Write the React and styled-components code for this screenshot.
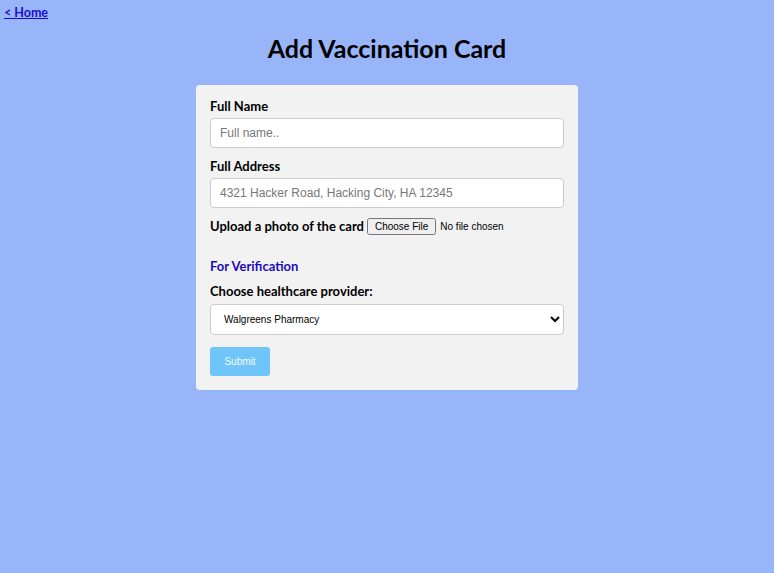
import React from 'react';
import styled, { createGlobalStyle } from 'styled-components';

const GlobalStyle = createGlobalStyle`
  html, body {
    margin: 0;
    padding: 0;
    background-color: #98b5f9;
    font-family: "Lato", "Open Sans", sans-serif;
  }
`;

const Page = styled.div`
  min-height: 573px;
  padding: 1px 0 40px;
  box-sizing: border-box;
`;

const HomeLink = styled.a`
  display: inline-block;
  margin-left: 4px;
  font-size: 12.5px;
  line-height: 17px;
  font-weight: 700;
  color: #1a0dcc;
  text-decoration: underline;
  cursor: pointer;
`;

const Title = styled.h1`
  margin: 12px 0 22px;
  text-align: center;
  font-size: 25px;
  font-weight: 700;
  color: #000;
`;

const Card = styled.form`
  width: 382px;
  margin: 0 auto;
  box-sizing: border-box;
  padding: 13px 14px 14px;
  background-color: #f2f2f2;
  border-radius: 4px;
`;

const Label = styled.label`
  display: block;
  font-size: 13px;
  line-height: 17px;
  font-weight: 700;
  color: #000;
  margin-bottom: ${(p) => p.$gap || 3}px;
`;

const TextInput = styled.input`
  display: block;
  width: 100%;
  height: 30px;
  box-sizing: border-box;
  padding: 0 9px;
  margin-bottom: 10px;
  border: 1px solid #cccccc;
  border-radius: 4px;
  background: #fff;
  font-family: "Liberation Sans", Arial, sans-serif;
  font-size: 12px;
  &::placeholder {
    color: #777;
  }
`;

const UploadRow = styled.div`
  display: flex;
  align-items: center;
  gap: 3px;
  height: 16px;
  margin: 0 0 24px;
  font-size: 13px;
  font-weight: 700;
  white-space: nowrap;
  span {
    flex-shrink: 0;
  }
  input {
    font-family: "Liberation Sans", Arial, sans-serif;
    font-size: 10px;
    font-weight: 400;
  }
`;

const SectionTitle = styled.h3`
  margin: 0 0 8px;
  font-size: 13px;
  line-height: 17px;
  font-weight: 700;
  color: #1a0dbb;
`;

const Select = styled.select`
  display: block;
  width: 100%;
  height: 31px;
  box-sizing: border-box;
  padding: 0 9px;
  margin-bottom: 12px;
  border: 1px solid #cccccc;
  border-radius: 4px;
  background: #fff;
  font-family: "Liberation Sans", Arial, sans-serif;
  font-size: 10px;
  color: #000;
`;

const SubmitButton = styled.button`
  display: block;
  width: 60px;
  height: 29px;
  border: none;
  border-radius: 3px;
  background-color: #6fc5f8;
  color: #f4f9ff;
  font-family: "Liberation Sans", Arial, sans-serif;
  font-size: 10px;
  cursor: pointer;
`;

export default function App() {
  return (
    <>
      <GlobalStyle />
      <Page>
        <HomeLink>&lt; Home</HomeLink>
        <Title>Add Vaccination Card</Title>
        <Card onSubmit={(e) => e.preventDefault()}>
          <Label htmlFor="name">Full Name</Label>
          <TextInput id="name" placeholder="Full name.." />
          <Label htmlFor="address">Full Address</Label>
          <TextInput id="address" placeholder="4321 Hacker Road, Hacking City, HA 12345" />
          <UploadRow>
            <span>Upload a photo of the card</span>
            <input type="file" />
          </UploadRow>
          <SectionTitle>For Verification</SectionTitle>
          <Label htmlFor="provider" $gap={4}>Choose healthcare provider:</Label>
          <Select id="provider" defaultValue="walgreens">
            <option value="walgreens">Walgreens Pharmacy</option>
            <option value="cvs">CVS Pharmacy</option>
            <option value="riteaid">Rite Aid</option>
          </Select>
          <SubmitButton type="submit">Submit</SubmitButton>
        </Card>
      </Page>
    </>
  );
}
